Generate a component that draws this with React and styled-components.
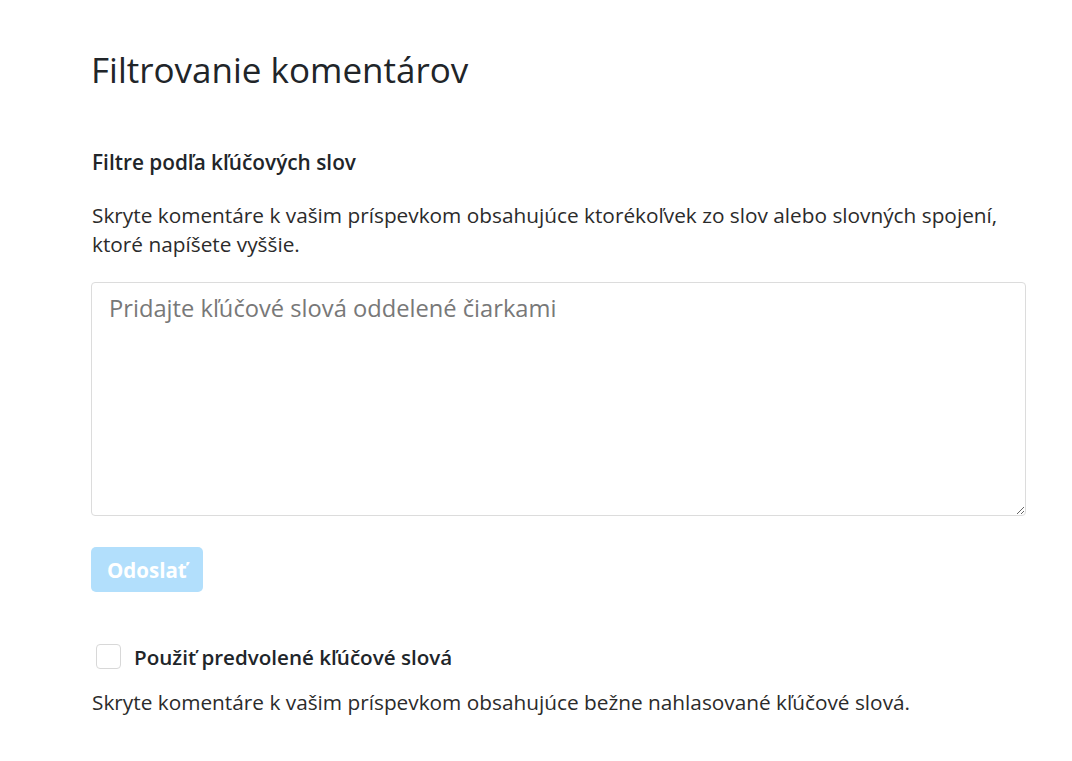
import React from "react";
import styled, { createGlobalStyle } from "styled-components";

const GlobalStyle = createGlobalStyle`
  html, body {
    margin: 0;
    padding: 0;
    background: #fff;
  }
  body {
    font-family: "Open Sans", "Noto Sans", sans-serif;
    color: #212529;
  }
`;

const Page = styled.div`
  padding: 47px 46px 40px 91px;
  max-width: 935px;
`;

const Title = styled.h1`
  margin: 0 0 55px;
  font-size: 35px;
  font-weight: 400;
  line-height: 46px;
  color: #212529;
`;

const Heading = styled.h3`
  margin: 0 0 24px 1px;
  font-size: 20.8px;
  font-weight: 600;
  line-height: 29px;
`;

const Help = styled.p`
  margin: 0 0 ${(p) => p.$gap || 0}px 1px;
  font-size: 20.8px;
  line-height: 29px;
  color: #2b2b2b;
`;

const TextArea = styled.textarea`
  display: block;
  box-sizing: border-box;
  width: 100%;
  height: 234px;
  padding: 9px 17px;
  border: 1px solid #dcdcdc;
  border-radius: 4px;
  font-family: inherit;
  font-size: 23.7px;
  line-height: 33px;
  color: #333;
  resize: vertical;
  outline: none;

  &::placeholder {
    color: #787878;
  }
`;

const SubmitButton = styled.button`
  display: block;
  margin: 31px 0 50px;
  height: 45px;
  padding: 0 16px;
  border: none;
  border-radius: 5px;
  background: #b2dffc;
  color: #fff;
  font-family: inherit;
  font-size: 20.5px;
  font-weight: 700;
  cursor: not-allowed;
`;

const CheckRow = styled.label`
  display: flex;
  align-items: center;
  gap: 13px;
  height: 29px;
  margin: 0 0 17px 5px;
  font-size: 20.6px;
  font-weight: 600;
  cursor: pointer;
`;

const Box = styled.span`
  flex: none;
  width: 25px;
  height: 25px;
  box-sizing: border-box;
  border: 1px solid #d8d8d8;
  border-radius: 4px;
  background: #fff;
`;

export default function App() {
  return (
    <>
      <GlobalStyle />
      <Page>
        <Title>Filtrovanie komentárov</Title>
        <Heading>Filtre podľa kľúčových slov</Heading>
        <Help $gap={23}>
          Skryte komentáre k vašim príspevkom obsahujúce ktorékoľvek zo slov
          alebo slovných spojení, ktoré napíšete vyššie.
        </Help>
        <TextArea placeholder="Pridajte kľúčové slová oddelené čiarkami" />
        <SubmitButton disabled>Odoslať</SubmitButton>
        <CheckRow>
          <Box />
          Použiť predvolené kľúčové slová
        </CheckRow>
        <Help>
          Skryte komentáre k vašim príspevkom obsahujúce bežne nahlasované
          kľúčové slová.
        </Help>
      </Page>
    </>
  );
}
